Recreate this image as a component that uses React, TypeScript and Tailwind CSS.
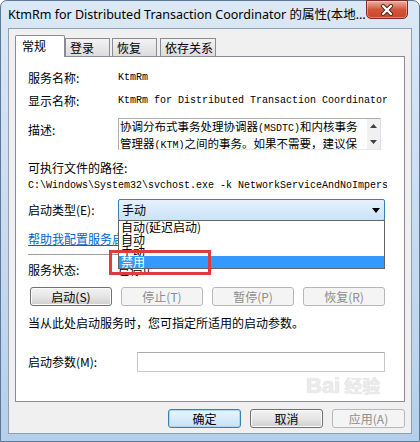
import React from "react";

const cjk = { fontFamily: '"Noto Sans CJK SC", "Noto Sans", sans-serif' };
const mono = { fontFamily: '"Liberation Mono", "Noto Sans CJK SC", monospace' };
const title = { fontFamily: '"Noto Sans", "Noto Sans CJK SC", sans-serif' };

function Btn({ children, disabled, focus, w }: { children: React.ReactNode; disabled?: boolean; focus?: boolean; w: string }) {
  const base = "h-[19px] rounded-[3px] border flex items-center justify-center text-[12px] leading-none shrink-0 ";
  let cls = "";
  if (disabled) cls = "border-[#b5b8bb] bg-[#f4f4f4] text-[#8d8d8d]";
  else if (focus) cls = "border-[#3c7fb1] bg-gradient-to-b from-[#eaf5fc] to-[#c6e2f6] text-black shadow-[inset_0_0_0_1px_#a9d6f5]";
  else cls = "border-[#707070] bg-gradient-to-b from-[#f2f2f2] via-[#e6e6e6] to-[#cfcfcf] text-black shadow-[inset_0_0_0_1px_#fbfbfb]";
  return (
    <div className={base + cls + " " + w} style={cjk}>
      {children}
    </div>
  );
}

export default function App() {
  return (
    <div className="w-[420px] h-[442px] overflow-hidden bg-white">
      <div className="w-[420px] h-[442px] flex flex-col rounded-t-[7px] border border-[#5b7898] bg-gradient-to-b from-[#dbe8f5] via-[#c9dcf0] to-[#b5cfea] px-[7px] pb-[7px]">
        {/* title bar */}
        <div className="h-[27px] flex items-start justify-between shrink-0">
          <div className="mt-[6px] text-[12.5px] leading-[16px] text-black whitespace-nowrap" style={title}>
            KtmRm for Distributed Transaction Coordinator 的属性(本地...
          </div>
          <div className="w-[42px] h-[19px] mr-[4px] -mt-px rounded-b-[5px] border border-[#7d2b22] bg-gradient-to-b from-[#eab0a2] via-[#d4553c] to-[#c8452a] flex items-center justify-center shadow-[inset_0_0_0_1px_rgba(255,255,255,0.35)]">
            <svg width="14" height="12" viewBox="0 0 14 12">
              <path d="M3 2 L11 10 M11 2 L3 10" stroke="#4a2a24" strokeWidth="4" strokeLinecap="round" />
              <path d="M3 2 L11 10 M11 2 L3 10" stroke="#ffffff" strokeWidth="2.2" strokeLinecap="round" />
            </svg>
          </div>
        </div>

        {/* client area */}
        <div className="flex-1 flex flex-col bg-[#f0f0f0] border border-[#8b9fb5] pt-[6px] px-[6px]" style={cjk}>
          {/* tabs */}
          <div className="flex items-end h-[21px] text-[12px] text-black relative z-10">
            <div className="w-[50px] h-[22px] -mb-px bg-white border border-b-0 border-[#898c95] pl-[6px] pt-[2px] leading-[16px] rounded-t-[2px]">常规</div>
            <div className="w-[45px] h-[18px] border border-b-0 border-[#898c95] bg-gradient-to-b from-[#f3f3f3] to-[#dcdcdc] pl-[4px] pt-[1px] leading-[16px]">登录</div>
            <div className="w-[45px] h-[18px] ml-[2px] border border-b-0 border-[#898c95] bg-gradient-to-b from-[#f3f3f3] to-[#dcdcdc] pl-[4px] pt-[1px] leading-[16px]">恢复</div>
            <div className="w-[56px] h-[18px] ml-[3px] border border-b-0 border-[#898c95] bg-gradient-to-b from-[#f3f3f3] to-[#dcdcdc] pl-[4px] pt-[1px] leading-[16px]">依存关系</div>
          </div>

          {/* panel */}
          <div className="h-[346px] shrink-0 bg-white border border-[#898c95] pl-[12px] flex flex-col text-[12px] text-black relative">
            <div className="mt-[13px] h-[16px] flex items-center leading-[16px]">
              <div className="w-[90px] shrink-0">服务名称:</div>
              <div className="text-[10px]" style={mono}>KtmRm</div>
            </div>
            <div className="mt-[7px] h-[16px] flex items-center leading-[16px]">
              <div className="w-[90px] shrink-0">显示名称:</div>
              <div className="text-[10px] w-[269px] overflow-hidden whitespace-nowrap" style={mono}>KtmRm for Distributed Transaction Coordinator</div>
            </div>
            <div className="mt-[9px] flex items-start">
              <div className="w-[90px] shrink-0 pt-[4px] leading-[16px]">描述:</div>
              <div className="w-[263px] h-[32px] border border-[#abadb3] border-r-[#dbdfe6] border-b-[#e3e9ef] flex">
                <div className="flex-1 overflow-hidden pl-[1px] text-[11.5px] leading-[14px] whitespace-nowrap">
                  <div>协调分布式事务处理协调器<span className="text-[10px]" style={mono}>(MSDTC)</span>和内核事务</div>
                  <div>管理器<span className="text-[10px]" style={mono}>(KTM)</span>之间的事务。如果不需要，建议保</div>
                </div>
                <div className="w-[13px] bg-[#f0f0f0] flex flex-col items-center justify-between py-[5px]">
                  <svg width="7" height="4" viewBox="0 0 7 4"><path d="M3.5 0 L7 4 L0 4 Z" fill="#404040" /></svg>
                  <svg width="7" height="4" viewBox="0 0 7 4"><path d="M0 0 L7 0 L3.5 4 Z" fill="#404040" /></svg>
                </div>
              </div>
            </div>
            <div className="mt-[10px] h-[16px] leading-[16px]">可执行文件的路径:</div>
            <div className="mt-[1px] h-[16px] flex items-center w-[359px] overflow-hidden whitespace-nowrap text-[10px]" style={mono}>
              C:\Windows\System32\svchost.exe -k NetworkServiceAndNoImpersonation
            </div>
            <div className="mt-[6px] flex items-center">
              <div className="w-[90px] shrink-0 leading-[16px]">启动类型(E):</div>
              <div className="relative w-[267px] h-[22px]">
                <div className="w-full h-full rounded-[2px] border border-[#3c7fb1] bg-gradient-to-b from-[#e6f2fc] to-[#c9e3f8] flex items-center justify-between pl-[3px] pr-[4px]">
                  <span className="leading-[16px]">手动</span>
                  <svg width="8" height="5" viewBox="0 0 8 5"><path d="M0 0 L8 0 L4 5 Z" fill="#000" /></svg>
                </div>
                {/* dropdown list */}
                <div className="absolute left-0 top-[21px] w-[267px] h-[49px] bg-white border border-[#646464] z-20 flex flex-col">
                  <div className="h-[12px] leading-[12px] pl-[2px]">自动(延迟启动)</div>
                  <div className="h-[12px] leading-[12px] pl-[2px]">自动</div>
                  <div className="h-[11px] leading-[12px] pl-[2px] overflow-visible">手动</div>
                  <div className="h-[12px] leading-[12px] pl-[2px] bg-[#3399ff] text-white relative z-10">禁用</div>
                </div>
                {/* red annotation box */}
                <div className="absolute left-[-9px] top-[51px] w-[102px] h-[25px] border-[3px] border-[#e0393e] z-30" />
              </div>
            </div>
            <div className="mt-[10px] h-[16px] leading-[16px] text-[#0066cc] underline whitespace-nowrap">帮助我配置服务启动选项。</div>
            <div className="mt-[7px] h-px w-[357px] bg-[#a0a0a0]" />
            <div className="mt-[7px] h-[16px] flex items-center leading-[16px]">
              <div className="w-[90px] shrink-0">服务状态:</div>
              <div>已停止</div>
            </div>
            <div className="mt-[9px] flex gap-[9px] ml-[2px]">
              <Btn w="w-[82px]">启动(S)</Btn>
              <Btn w="w-[82px]" disabled>停止(T)</Btn>
              <Btn w="w-[82px]" disabled>暂停(P)</Btn>
              <Btn w="w-[82px]" disabled>恢复(R)</Btn>
            </div>
            <div className="mt-[9px] h-[16px] leading-[16px]">当从此处启动服务时，您可指定所适用的启动参数。</div>
            <div className="mt-[21px] flex items-center">
              <div className="w-[109px] shrink-0 leading-[16px]">启动参数(M):</div>
              <div className="w-[248px] h-[20px] border border-[#c5c8cc] border-t-[#abadb3] bg-white" />
            </div>
            {/* watermark */}
            <div className="absolute left-[290px] top-[318px] text-[22px] font-bold text-[#ebebeb] leading-none pointer-events-none select-none" style={{ fontFamily: '"Liberation Sans", sans-serif', textShadow: "0 0 1px #cfcfcf" }}>
              Bai<span className="text-[18px] ml-[4px]" style={cjk}>经验</span>
            </div>
          </div>

          {/* bottom buttons */}
          <div className="mt-[7px] flex justify-end gap-[9px]">
            <Btn w="w-[73px]" focus>确定</Btn>
            <Btn w="w-[73px]">取消</Btn>
            <Btn w="w-[73px]" disabled>应用(A)</Btn>
          </div>
        </div>
      </div>
    </div>
  );
}
